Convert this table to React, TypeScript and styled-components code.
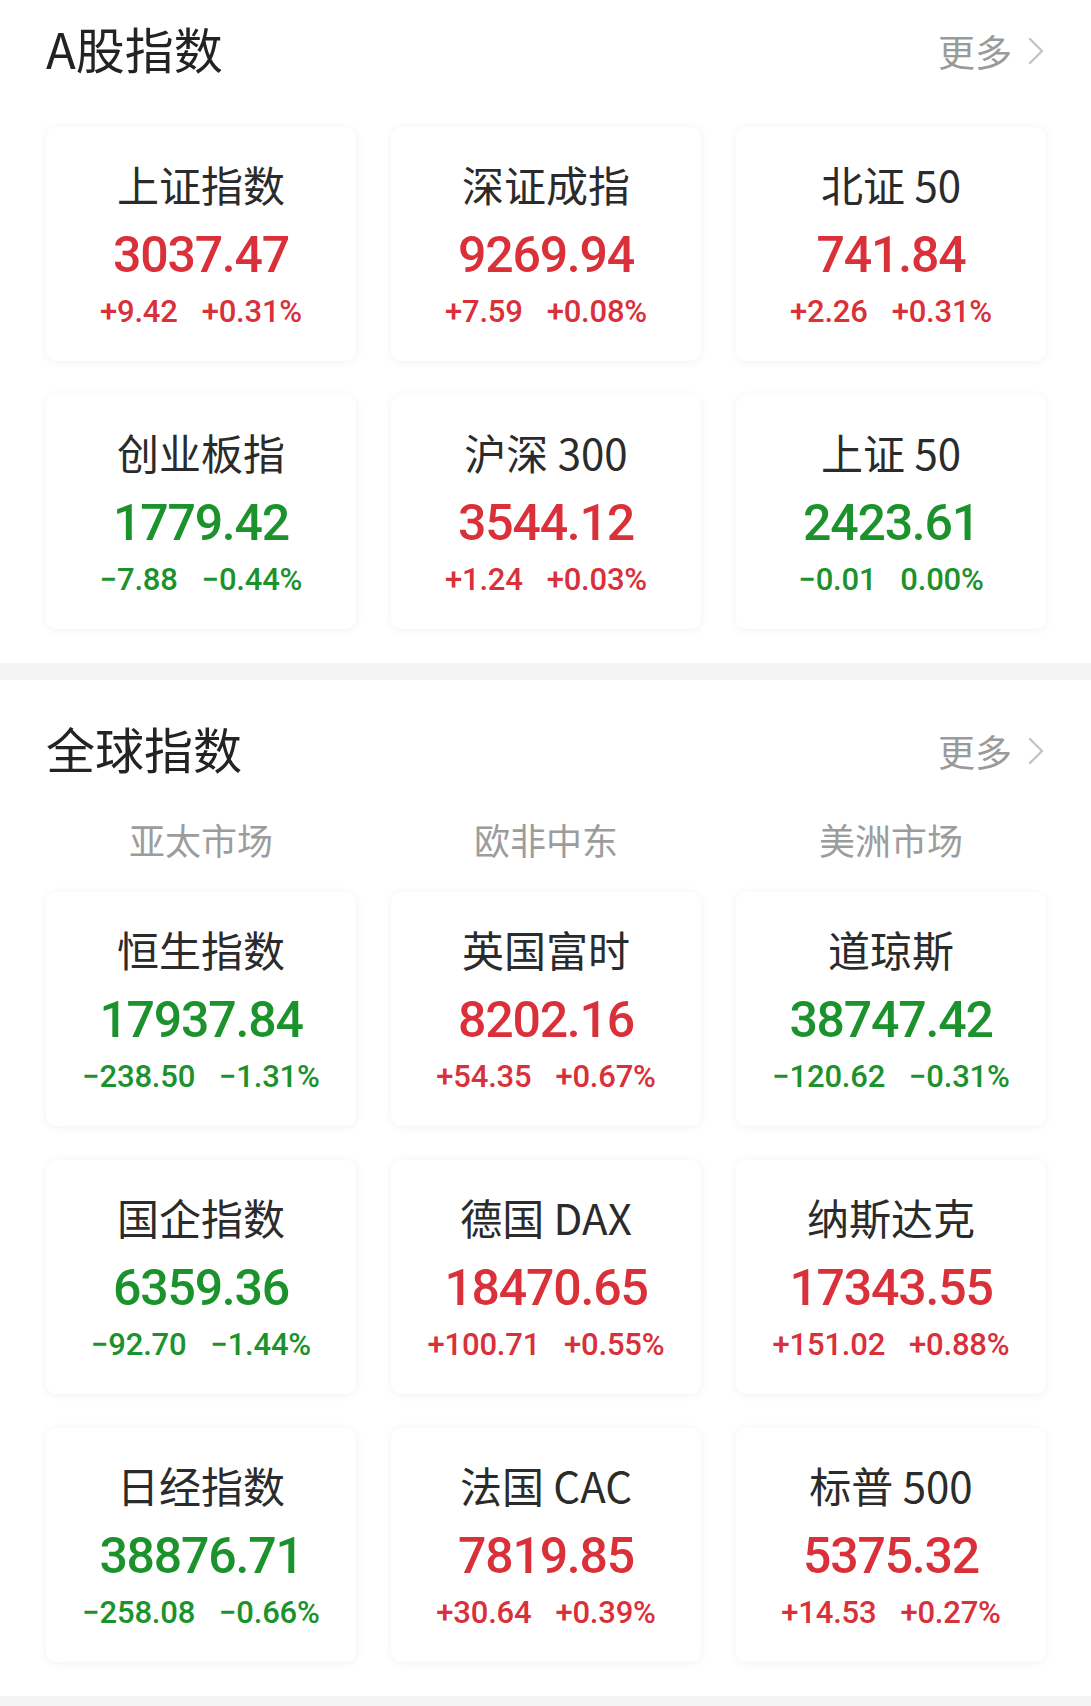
import React from "react";
import styled, { createGlobalStyle } from "styled-components";

const GlobalStyle = createGlobalStyle`
  html, body {
    margin: 0;
    padding: 0;
    background: #ffffff;
  }
  body {
    font-family: "Noto Sans CJK SC", "Noto Sans", sans-serif;
    -webkit-font-smoothing: antialiased;
  }
`;

const RED = "#d9303a";
const GREEN = "#1b922c";

type Quote = {
  name: string;
  price: string;
  change: string;
  pct: string;
  up: boolean;
};

const aShares: Quote[] = [
  { name: "上证指数", price: "3037.47", change: "+9.42", pct: "+0.31%", up: true },
  { name: "深证成指", price: "9269.94", change: "+7.59", pct: "+0.08%", up: true },
  { name: "北证 50", price: "741.84", change: "+2.26", pct: "+0.31%", up: true },
  { name: "创业板指", price: "1779.42", change: "−7.88", pct: "−0.44%", up: false },
  { name: "沪深 300", price: "3544.12", change: "+1.24", pct: "+0.03%", up: true },
  { name: "上证 50", price: "2423.61", change: "−0.01", pct: "0.00%", up: false },
];

const globalIdx: Quote[] = [
  { name: "恒生指数", price: "17937.84", change: "−238.50", pct: "−1.31%", up: false },
  { name: "英国富时", price: "8202.16", change: "+54.35", pct: "+0.67%", up: true },
  { name: "道琼斯", price: "38747.42", change: "−120.62", pct: "−0.31%", up: false },
  { name: "国企指数", price: "6359.36", change: "−92.70", pct: "−1.44%", up: false },
  { name: "德国 DAX", price: "18470.65", change: "+100.71", pct: "+0.55%", up: true },
  { name: "纳斯达克", price: "17343.55", change: "+151.02", pct: "+0.88%", up: true },
  { name: "日经指数", price: "38876.71", change: "−258.08", pct: "−0.66%", up: false },
  { name: "法国 CAC", price: "7819.85", change: "+30.64", pct: "+0.39%", up: true },
  { name: "标普 500", price: "5375.32", change: "+14.53", pct: "+0.27%", up: true },
];

const Page = styled.div`
  width: 1091px;
  background: #fff;
`;

const Section = styled.section<{ $top: number }>`
  padding: ${(p) => p.$top}px 45px 34px 46px;
  display: flex;
  flex-direction: column;
`;

const Header = styled.div`
  height: 60px;
  display: flex;
  align-items: center;
  justify-content: space-between;
`;

const Title = styled.h2`
  margin: 0;
  font-family: "Noto Sans CJK SC", sans-serif;
  font-size: 49px;
  font-weight: 400;
  line-height: 60px;
  color: #232323;
`;

const More = styled.div`
  display: flex;
  align-items: center;
  gap: 15px;
  margin-top: 6px;
  font-family: "Noto Sans CJK SC", sans-serif;
  font-size: 37px;
  line-height: 60px;
  color: #9a9a9a;
  padding-right: 1px;
`;

const Tabs = styled.div`
  margin-top: 36px;
  display: grid;
  grid-template-columns: repeat(3, 1fr);
  column-gap: 35px;
`;

const Tab = styled.div`
  text-align: center;
  font-family: "Noto Sans CJK SC", sans-serif;
  font-size: 36px;
  line-height: 50px;
  color: #9c9c9c;
`;

const Grid = styled.div<{ $mt: number }>`
  margin-top: ${(p) => p.$mt}px;
  display: grid;
  grid-template-columns: repeat(3, 1fr);
  column-gap: 35px;
  row-gap: 34px;
`;

const Card = styled.div`
  height: 234px;
  box-sizing: border-box;
  padding-top: 32px;
  background: #fff;
  border-radius: 10px;
  box-shadow: 0 1px 10px rgba(0, 0, 0, 0.06);
  display: flex;
  flex-direction: column;
  align-items: center;
`;

const Name = styled.div`
  font-family: "Noto Sans CJK SC", sans-serif;
  font-size: 42px;
  font-weight: 400;
  line-height: 50px;
  color: #2b2b2b;
  white-space: nowrap;
`;

const Price = styled.div<{ $up: boolean }>`
  margin-top: 18px;
  font-family: Roboto, "Liberation Sans", sans-serif;
  font-size: 50px;
  font-weight: 500;
  line-height: 56px;
  letter-spacing: -1.2px;
  color: ${(p) => (p.$up ? RED : GREEN)};
`;

const ChangeRow = styled.div<{ $up: boolean }>`
  margin-top: 11px;
  display: flex;
  gap: 24px;
  font-family: Roboto, "Liberation Sans", sans-serif;
  font-size: 31px;
  font-weight: 500;
  line-height: 36px;
  letter-spacing: -0.2px;
  color: ${(p) => (p.$up ? RED : GREEN)};
`;

const Divider = styled.div`
  height: 17px;
  background: #f4f4f5;
`;

const Chevron = () => (
  <svg width="18" height="30" viewBox="0 0 18 30" fill="none">
    <path d="M3 3 L15 15 L3 27" stroke="#c4c4c4" strokeWidth="2.4" strokeLinecap="round" strokeLinejoin="round" />
  </svg>
);

const QuoteCard = ({ q }: { q: Quote }) => (
  <Card>
    <Name>{q.name}</Name>
    <Price $up={q.up}>{q.price}</Price>
    <ChangeRow $up={q.up}>
      <span>{q.change}</span>
      <span>{q.pct}</span>
    </ChangeRow>
  </Card>
);

export default function App() {
  return (
    <>
      <GlobalStyle />
      <Page>
        <Section $top={18}>
          <Header>
            <Title>A股指数</Title>
            <More>
              更多
              <Chevron />
            </More>
          </Header>
          <Grid $mt={49}>
            {aShares.map((q) => (
              <QuoteCard key={q.name} q={q} />
            ))}
          </Grid>
        </Section>
        <Divider />
        <Section $top={38}>
          <Header>
            <Title>全球指数</Title>
            <More>
              更多
              <Chevron />
            </More>
          </Header>
          <Tabs>
            <Tab>亚太市场</Tab>
            <Tab>欧非中东</Tab>
            <Tab>美洲市场</Tab>
          </Tabs>
          <Grid $mt={28}>
            {globalIdx.map((q) => (
              <QuoteCard key={q.name} q={q} />
            ))}
          </Grid>
        </Section>
        <Divider />
      </Page>
    </>
  );
}
